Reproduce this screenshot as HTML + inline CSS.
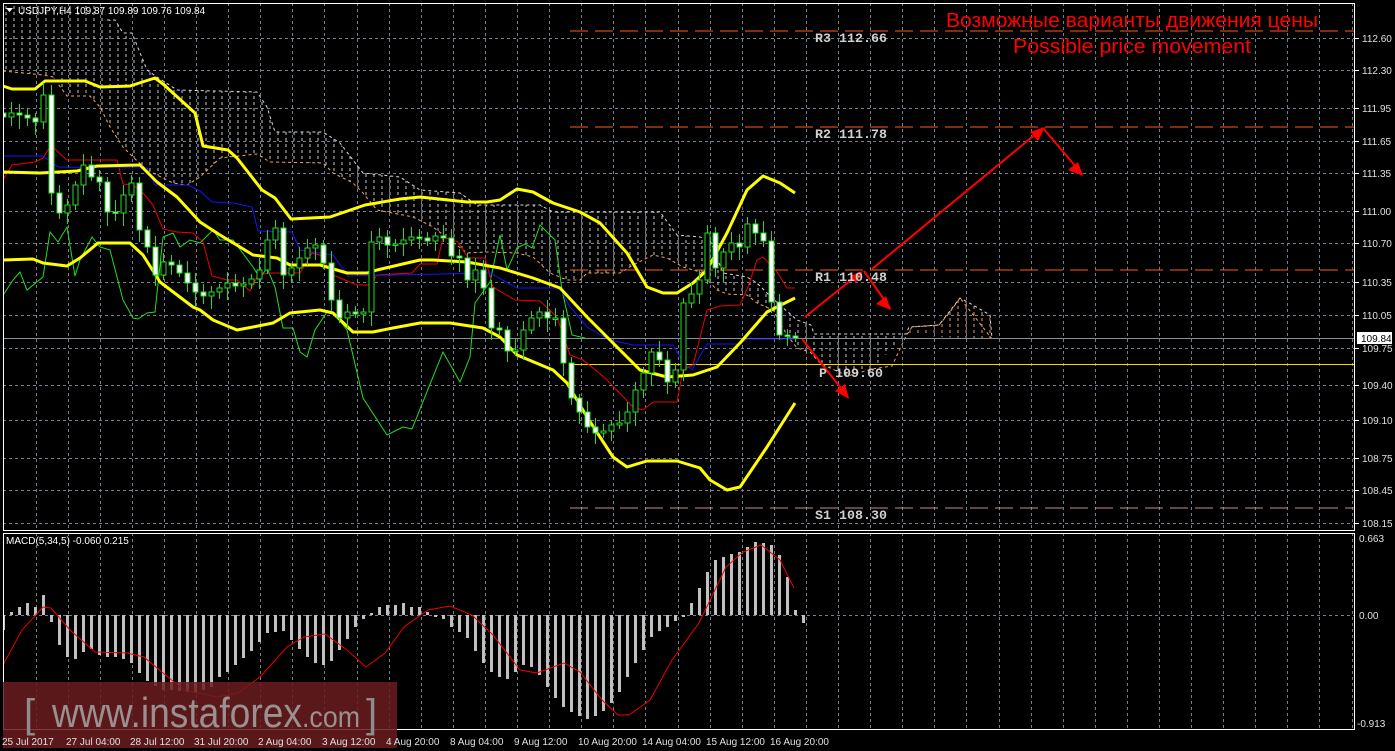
<!DOCTYPE html>
<html><head><meta charset="utf-8"><style>
html,body{margin:0;padding:0;background:#000;width:1395px;height:751px;overflow:hidden}
svg{display:block}
</style></head><body>
<svg id="c" width="1395" height="751" viewBox="0 0 1395 751" xmlns="http://www.w3.org/2000/svg" font-family="Liberation Sans, sans-serif">
<defs>
<pattern id="hatch" width="8" height="6" patternUnits="userSpaceOnUse" x="2"><line x1="4" y1="0" x2="4" y2="3" stroke="#c8c8c8" stroke-width="1"/></pattern>
<pattern id="hatchO" width="8" height="6" patternUnits="userSpaceOnUse" x="2"><line x1="4" y1="0" x2="4" y2="3" stroke="#e8a070" stroke-width="1"/></pattern>
<clipPath id="mainclip"><rect x="3" y="3" width="1352" height="527"/></clipPath>
<clipPath id="macdclip"><rect x="3" y="533" width="1352" height="197"/></clipPath>
</defs>
<rect width="1395" height="751" fill="#000"/>
<g id="grid" stroke="#6f7f90" stroke-width="1" stroke-dasharray="3,3" fill="none"></g>
<g clip-path="url(#mainclip)">
<polygon fill="url(#hatch)" points="3,3 100,3 107,20 115,20 123,33 132,33 147,70 157,77 177,90 257,92 267,107 275,132 323,132 340,143 363,173 400,177 420,190 460,193 477,205 540,205 553,212 660,212 677,235 700,237 710,240 723,273 747,277 757,283 772,298 797,320 811,325 814,334 906,334 872,369 848,376 821,364 810,352 797,348 787,335 773,310 757,303 747,295 727,294 717,290 700,272 683,267 667,258 653,255 633,265 620,273 587,273 580,280 567,280 550,273 533,257 517,253 487,252 467,253 433,227 413,217 377,210 363,193 353,183 333,173 323,163 270,162 257,154 220,158 200,177 187,185 173,183 147,170 133,157 123,147 110,127 100,107 90,96 67,96 53,77 43,75 3,71"/>
<polygon fill="url(#hatchO)" points="906,336 912,327 939,325 950,312 960,298 973,305 990,315 992,339 939,337 909,334"/>
<polyline fill="none" stroke="#d8d8d8" stroke-width="1" stroke-dasharray="3,3" points="107,20 115,20 123,33 132,33 147,70 157,77 177,90 257,92 267,107 275,132 323,132 340,143 363,173 400,177 420,190 460,193 477,205 540,205 553,212 660,212 677,235 700,237 710,240 723,273 747,277 757,283 772,298 797,320 811,325 814,334 906,334 909,327 939,325 960,298 973,305 990,315 992,339"/>
<polyline fill="none" stroke="#f4a460" stroke-width="1" stroke-dasharray="3,3" points="3,71 43,75 53,77 67,96 90,96 100,107 110,127 123,147 133,157 147,170 173,183 187,185 200,177 220,158 257,154 270,162 323,163 333,173 353,183 363,193 377,210 413,217 433,227 467,253 487,252 517,253 533,257 550,273 567,280 580,280 587,273 620,273 633,265 653,255 667,258 683,267 700,272 717,290 727,294 747,295 757,303 773,310 787,335 797,348 810,352 821,364 848,376 872,369 892,366 906,336 912,327 939,325 950,312 960,298 992,339"/>
<line x1="570" y1="31" x2="1355" y2="31" stroke="#ff5a1e" stroke-width="1" stroke-dasharray="18,7"/>
<line x1="570" y1="127" x2="1355" y2="127" stroke="#ff5a1e" stroke-width="1" stroke-dasharray="18,7"/>
<line x1="570" y1="270" x2="1355" y2="270" stroke="#ff5a1e" stroke-width="1" stroke-dasharray="18,7"/>
<line x1="570" y1="508" x2="1355" y2="508" stroke="#c09090" stroke-width="1" stroke-dasharray="18,7"/>
<line x1="3" y1="338.5" x2="1355" y2="338.5" stroke="#8090a0" stroke-width="1"/>
<line x1="570" y1="364.5" x2="1355" y2="364.5" stroke="#ffd700" stroke-width="1"/>
<polyline fill="none" stroke="#22dd22" stroke-width="1" points="0,300 13,280 20,272 27,290 43,277 50,232 58,242 67,227 75,276 80,260 92,237 100,247 110,250 123,300 133,318 138,319 147,313 155,312 163,237 173,233 180,247 190,240 200,243 213,230 220,240 233,240 253,267 260,278 267,268 275,287 283,328 293,328 300,352 307,357 315,330 327,312 333,312 347,330 363,398 387,435 403,427 412,429 443,352 460,382 470,357 475,303 490,282 500,235 507,270 517,248 525,244 532,248 540,225 555,240 562,290 572,335 585,338"/>
<polyline fill="none" stroke="#ee0000" stroke-width="1" points="3,180 12,165 35,162 43,158 51,145 58,152 67,160 117,160 123,184 133,185 143,193 153,205 163,229 177,232 193,233 203,242 212,276 227,280 237,280 250,291 258,275 270,273 300,273 312,253 320,255 333,275 357,285 370,285 377,275 412,273 420,264 437,264 443,237 458,242 468,258 485,258 493,287 515,300 540,301 557,317 570,355 583,360 593,368 607,380 633,407 643,410 653,402 677,402 683,370 693,365 707,310 720,306 740,305 748,287 757,260 763,257 777,272 787,288 795,288"/>
<polyline fill="none" stroke="#1414ff" stroke-width="1" points="3,156 43,156 58,167 147,168 155,185 188,185 200,191 212,202 233,203 252,207 258,231 292,232 300,250 333,255 348,276 490,273 517,288 560,288 570,307 587,327 610,340 633,345 673,345 683,362 692,370 707,344 740,344 747,339 795,339"/>
<g fill="none" stroke="#ffff00" stroke-width="3" stroke-linejoin="round">
<polyline points="3,86 12,89 35,89 45,81 85,81 100,87 130,86 155,78 163,84 195,113 203,146 228,150 237,158 262,190 275,198 291,219 330,217 365,205 400,199 420,197 467,202 487,202 500,200 517,189 533,192 553,203 580,212 600,223 627,253 647,287 663,293 677,293 693,283 707,270 727,233 747,190 763,176 780,183 795,193"/>
<polyline points="3,172 40,173 77,171 97,166 140,165 157,182 177,197 200,222 220,235 240,247 253,255 277,258 290,265 320,265 347,273 367,273 377,270 420,260 433,260 467,262 500,268 533,278 560,288 587,317 613,343 640,370 667,377 693,375 717,367 740,343 767,312 795,298"/>
<polyline points="3,260 33,259 43,263 67,266 80,258 98,243 130,243 143,255 160,282 193,307 200,310 213,320 237,330 253,327 273,323 290,313 320,310 333,313 353,332 373,332 393,328 420,323 450,323 483,328 500,337 517,355 553,370 567,383 587,417 613,457 627,467 647,461 677,461 700,468 710,480 727,490 740,487 767,447 795,403"/>
</g>
<g id="candles"></g>
<g stroke="#ff0000" stroke-width="2" fill="none">
<line x1="805" y1="317" x2="861" y2="272"/>
<line x1="872" y1="269" x2="1043" y2="128"/>
<line x1="1043" y1="128" x2="1082" y2="174"/>
<line x1="864" y1="271" x2="890" y2="308"/>
<line x1="802" y1="339" x2="848" y2="397"/>
</g>
<g fill="#ff0000">
<polygon points="863,271 850,276 856,283"/>
<polygon points="1045,127 1030,132 1038,141"/>
<polygon points="1083,176 1068,170 1078,162"/>
<polygon points="891,310 876,304 886,296"/>
<polygon points="849,399 835,391 845,384"/>
</g>
</g>
<g clip-path="url(#macdclip)">
<g id="macd" fill="#c0c0c0"></g>
<polyline fill="none" stroke="#ee0000" stroke-width="1" points="3,665 22,630 43,607 51,608 70,630 95,652 127,653 144,657 163,673 184,690 217,697 238,693 260,677 287,647 304,637 325,634 347,650 366,667 385,653 404,627 428,610 450,606 472,615 493,635 520,670 537,673 564,663 580,672 602,700 618,715 629,715 650,700 672,660 699,623 726,567 743,552 761,545 780,560 794,588"/>
</g>
<rect x="3.5" y="3.5" width="1351" height="527" fill="none" stroke="#fff" stroke-width="1"/>
<rect x="3.5" y="533.5" width="1351" height="196" fill="none" stroke="#fff" stroke-width="1"/>
<rect x="3" y="682" width="394" height="66" fill="#6a1c1e" fill-opacity="0.85"/>
<text x="24" y="727" font-size="40" fill="#8c8c8c">[</text>
<text x="52" y="727" font-size="42" fill="#9a9090" textLength="250" lengthAdjust="spacingAndGlyphs">www.instaforex</text>
<text x="302" y="727" font-size="30" fill="#9a9090" textLength="58" lengthAdjust="spacingAndGlyphs">.com</text>
<text x="366" y="727" font-size="40" fill="#8c8c8c">]</text>
<polygon points="6,8 13,8 9.5,12" fill="#fff"/>
<text x="18" y="14" font-size="10" fill="#fff">USDJPY,H4  109.87 109.89 109.76 109.84</text>
<text x="6" y="544" font-size="10" fill="#fff">MACD(5,34,5) -0.060 0.215</text>
<text x="1132" y="27" font-size="20" fill="#ff0000" text-anchor="middle" textLength="372" lengthAdjust="spacingAndGlyphs">Возможные варианты движения цены</text>
<text x="1132" y="53" font-size="20" fill="#ff0000" text-anchor="middle" textLength="238" lengthAdjust="spacingAndGlyphs">Possible price movement</text>
<g font-family="Liberation Mono, monospace" font-size="13" font-weight="bold" fill="#d0d0d0">
<text x="815" y="42" textLength="72" lengthAdjust="spacingAndGlyphs">R3 112.66</text>
<text x="815" y="138" textLength="72" lengthAdjust="spacingAndGlyphs">R2 111.78</text>
<text x="815" y="281" textLength="72" lengthAdjust="spacingAndGlyphs">R1 110.48</text>
<text x="819" y="377" textLength="64" lengthAdjust="spacingAndGlyphs">P 109.60</text>
<text x="815" y="519" textLength="72" lengthAdjust="spacingAndGlyphs">S1 108.30</text>
</g>
<rect x="1357" y="332" width="35" height="12" fill="#fff"/>
<text x="1361" y="342" font-size="10" fill="#000">109.84</text>
<g font-size="10" fill="#e0e0e0">
<text x="2" y="745">25 Jul 2017</text><text x="66" y="745">27 Jul 04:00</text><text x="130" y="745">28 Jul 12:00</text><text x="194" y="745">31 Jul 20:00</text><text x="258" y="745">2 Aug 04:00</text><text x="322" y="745">3 Aug 12:00</text><text x="386" y="745">4 Aug 20:00</text><text x="450" y="745">8 Aug 04:00</text><text x="514" y="745">9 Aug 12:00</text><text x="578" y="745">10 Aug 20:00</text><text x="642" y="745">14 Aug 04:00</text><text x="706" y="745">15 Aug 12:00</text><text x="770" y="745">16 Aug 20:00</text>
<text x="1362" y="42">112.60</text><text x="1362" y="74">112.30</text><text x="1362" y="112">111.95</text><text x="1362" y="145">111.65</text><text x="1362" y="177">111.35</text><text x="1362" y="215">111.00</text><text x="1362" y="247">110.70</text><text x="1362" y="286">110.35</text><text x="1362" y="319">110.05</text><text x="1362" y="352">109.75</text><text x="1362" y="389">109.40</text><text x="1362" y="424">109.10</text><text x="1362" y="462">108.75</text><text x="1362" y="494">108.45</text><text x="1362" y="527">108.15</text>
<text x="1359" y="542">0.663</text><text x="1359" y="619">0.00</text><text x="1357" y="727">-0.913</text>
</g>
</svg>
<script>
(function(){
var NS="http://www.w3.org/2000/svg";
function el(p,n,a){var e=document.createElementNS(NS,n);for(var k in a)e.setAttribute(k,a[k]);p.appendChild(e);return e;}
var g=document.getElementById('grid');
var hy=[38,70,108,141,173,211,243,282,315,348,385,420,458,490,523,615];
hy.forEach(function(y){el(g,'line',{x1:3,y1:y+.5,x2:1355,y2:y+.5});});
for(var x=35.5;x<1355;x+=32.1){var xx=Math.round(x)+.5;el(g,'line',{x1:xx,y1:3,x2:xx,y2:530});el(g,'line',{x1:xx,y1:533,x2:xx,y2:730});}
hy.slice(0,15).forEach(function(y){el(g,'line',{x1:1355,y1:y+.5,x2:1359,y2:y+.5,'stroke-dasharray':'none',stroke:'#fff'});});
var cl=[117,113,115,118,122,95,193,213,205,185,165,177,182,212,213,195,183,230,247,275,262,265,273,283,292,296,292,288,283,286,284,279,270,240,228,275,268,258,248,245,263,300,318,312,314,312,242,237,245,244,240,237,238,241,236,238,256,258,280,270,288,328,330,351,350,330,318,312,318,318,363,398,412,427,433,431,425,423,412,390,373,352,360,382,370,303,294,280,233,268,252,243,247,224,233,241,302,335,336,338];
var c=document.getElementById('candles');var prev=113;
for(var i=0;i<cl.length;i++){var x=3+8*i,o=prev,cc=cl[i];var top=Math.min(o,cc),bot=Math.max(o,cc);
var hi=top-4-((i*7)%9),lo=bot+4+((i*5)%11);
el(c,'line',{x1:x+.5,y1:hi,x2:x+.5,y2:lo,stroke:'#22dd22','stroke-width':1});
var bear=cc>o;el(c,'rect',{x:x-2,y:top,width:5,height:Math.max(bot-top,1.5),fill:bear?'#fff':'#000',stroke:'#22dd22','stroke-width':1});prev=cc;}
var mv=[15,-3,-8,-12,-8,-20,7,30,42,44,37,34,40,42,42,44,48,58,66,71,75,75,76,77,78,75,72,62,57,50,43,36,27,18,17,16,25,34,42,48,50,46,35,24,12,4,-2,-8,-10,-10,-12,-8,-8,-3,2,4,12,17,23,36,48,57,62,64,57,50,52,60,72,83,92,97,101,104,101,96,88,77,62,48,35,22,16,12,6,2,-12,-27,-43,-55,-58,-61,-63,-68,-73,-72,-70,-60,-38,-5,8];
var m=document.getElementById('macd');
for(var j=0;j<mv.length;j++){var v=mv[j],x2=2+8*j;el(m,'rect',{x:x2,y:v<0?615+v:615,width:3,height:Math.abs(v)||1});}
})();
</script>
</body></html>
